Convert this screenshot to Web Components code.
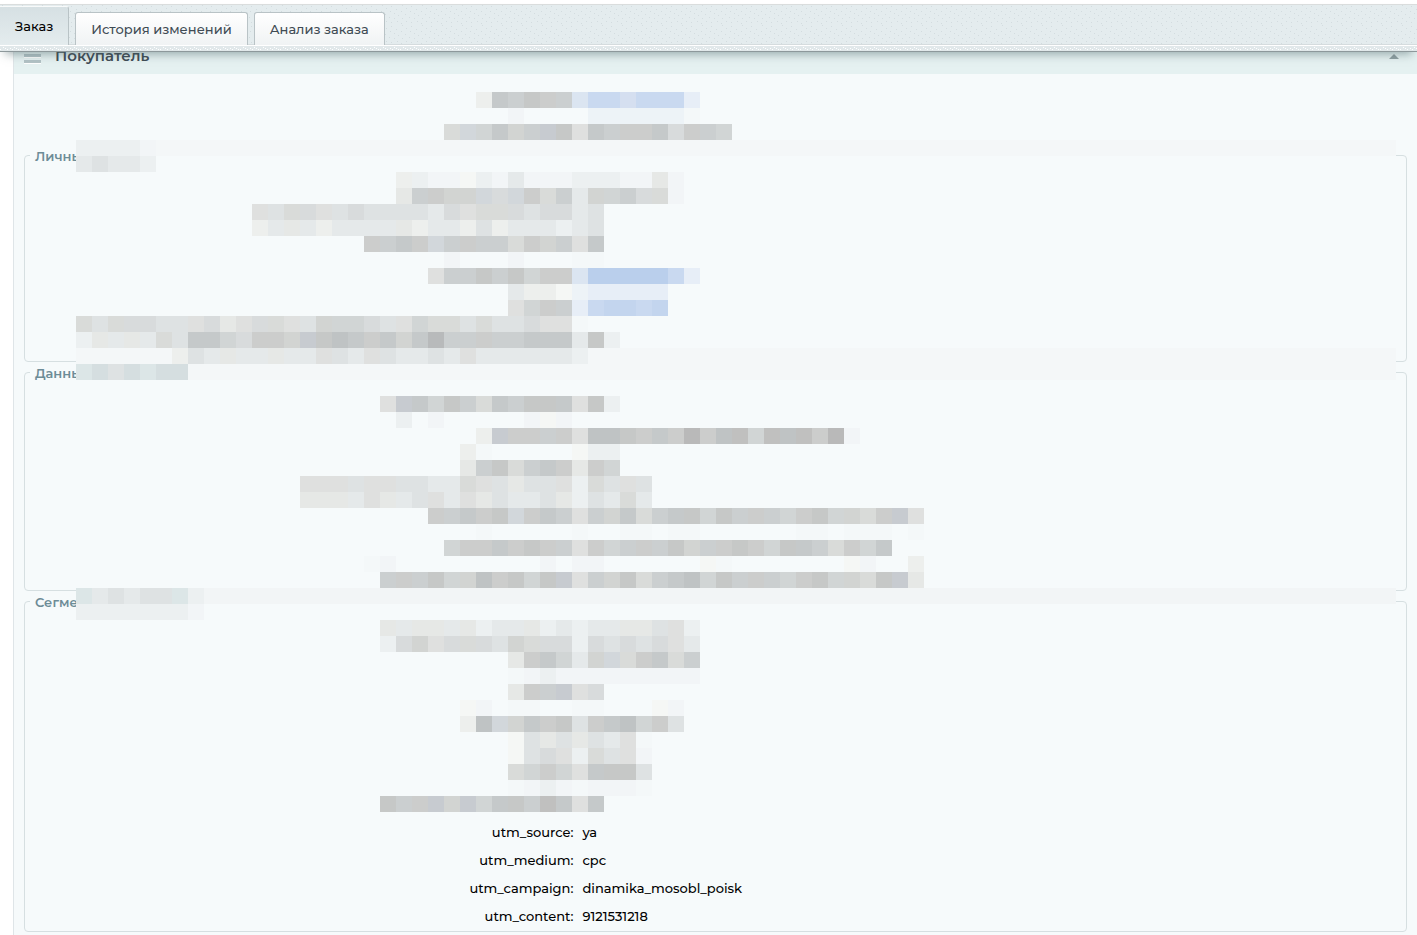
<!DOCTYPE html>
<html lang="ru">
<head>
<meta charset="utf-8">
<meta name="viewport" content="width=device-width, initial-scale=1">
<title>Заказ</title>
<style>
	html {
		background: #fff;
	}

	body {
		margin: 0;
		padding-top: 4px;
		font: 500 13px/16px Montserrat, Inter, "Liberation Sans", sans-serif;
		color: #000;
		overflow: hidden;
	}
</style>
</head>
<body>
<order-tabs>
	<order-tab active>Заказ</order-tab>
	<order-tab>История изменений</order-tab>
	<order-tab>Анализ заказа</order-tab>
</order-tabs>
<order-panel heading="Покупатель">
	<order-field></order-field>
	<order-field></order-field>
	<order-group legend="Личны">
		<order-field></order-field>
		<order-field></order-field>
		<order-field></order-field>
		<order-field></order-field>
		<order-field></order-field>
		<order-field tall></order-field>
	</order-group>
	<order-group legend="Данны">
		<order-field></order-field>
		<order-field></order-field>
		<order-field></order-field>
		<order-field></order-field>
		<order-field></order-field>
		<order-field></order-field>
		<order-field></order-field>
	</order-group>
	<order-group legend="Сегме">
		<order-field></order-field>
		<order-field></order-field>
		<order-field></order-field>
		<order-field></order-field>
		<order-field></order-field>
		<order-field></order-field>
		<order-field></order-field>
		<order-field label="utm_source:">ya</order-field>
		<order-field label="utm_medium:">cpc</order-field>
		<order-field label="utm_campaign:">dinamika_mosobl_poisk</order-field>
		<order-field label="utm_content:">9121531218</order-field>
	</order-group>
	<pixel-mask slot="mask"></pixel-mask>
</order-panel>

<script>
class OrderTabs extends HTMLElement {
	constructor() {
		super();
		this.attachShadow({ mode: "open" });
		this.shadowRoot.innerHTML = `
		<style>
			:host {
				display: block;
				position: relative;
				z-index: 2;
				background: #e4ecee;
				border-top: 1px solid #dadddd;
				border-bottom: 1px solid #8d989b;
				box-shadow: 0 7px 9px -5px rgba(70, 95, 100, 0.5);
			}

			.texture {
				position: absolute;
				inset: 0;
				width: 100%;
				height: 100%;
			}

			nav {
				position: relative;
				display: flex;
				align-items: flex-end;
				gap: 6px;
				height: 40px;
				border-bottom: 1px solid #fff;
				box-shadow: inset 0 -1px #d5dcde;
			}

			.edge {
				display: block;
				position: relative;
				width: 100%;
				height: 5px;
			}
		</style>
		<svg class="texture" aria-hidden="true">
			<defs>
				<pattern id="grain" width="20" height="20" patternUnits="userSpaceOnUse">
					<path fill="#d3dcdf" d="M2 0h1v1h-1zM11 1h1v1h-1zM6 3h1v1h-1zM16 4h1v1h-1zM1 6h1v1h-1zM10 6h1v1h-1zM14 8h1v1h-1zM5 9h1v1h-1zM18 10h1v1h-1zM9 12h1v1h-1zM2 13h1v1h-1zM14 13h1v1h-1zM6 16h1v1h-1zM17 16h1v1h-1zM11 17h1v1h-1zM1 18h1v1h-1z"/>
				</pattern>
			</defs>
			<rect width="100%" height="100%" fill="url(#grain)"/>
		</svg>
		<nav role="tablist"><slot></slot></nav>
		<svg class="edge" aria-hidden="true">
			<defs>
				<pattern id="dots" width="20" height="5" patternUnits="userSpaceOnUse">
					<path fill="#fff" d="M0 3h1v1h-1zM3 1h1v1h-1zM5 2h1v1h-1zM7 3h1v1h-1zM10 2h1v1h-1zM12 3h1v1h-1zM14 1h1v1h-1zM16 2h1v1h-1zM18 3h1v1h-1z"/>
				</pattern>
			</defs>
			<rect width="100%" height="5" fill="#e1e8ea"/>
			<rect width="100%" height="5" fill="url(#dots)"/>
		</svg>
	`;
	}
}

class OrderTab extends HTMLElement {
	constructor() {
		super();
		this.attachShadow({ mode: "open" });
		this.shadowRoot.innerHTML = `
		<style>
			:host {
				display: block;
			}

			button {
				display: block;
				height: 33px;
				margin: 0;
				padding: 0 15px;
				border: 1px solid #b9c3c6;
				border-bottom: 0;
				border-radius: 3px 3px 0 0;
				background: linear-gradient(#fff, #f0f3f4);
				color: #3f4b54;
				font: inherit;
				cursor: pointer;
			}

			:host([active]) button {
				height: 39px;
				padding-bottom: 1px;
				border-left: 0;
				border-top-color: #f8fafa;
				border-radius: 0 3px 0 0;
				background: linear-gradient(#d6e0e3, #e4ecee);
				color: #000;
			}
		</style>
		<button type="button" role="tab"><slot></slot></button>
	`;
	}

	connectedCallback() {
		this.shadowRoot.querySelector("button").ariaSelected = this.hasAttribute("active");
	}
}

class OrderPanel extends HTMLElement {
	constructor() {
		super();
		this.attachShadow({ mode: "open" });
		this.shadowRoot.innerHTML = `
		<style>
			:host {
				display: block;
				margin: -12px 0 0 13px;
				border-left: 1px solid #dfe5e8;
				background: #f6fafb;
			}

			header {
				display: flex;
				align-items: center;
				gap: 14px;
				box-sizing: border-box;
				height: 34px;
				padding: 0 18px 2px 10px;
				background: #e5f1f1;
			}

			h2 {
				flex: 1;
				margin: 0;
				font-size: 15px;
				font-weight: 600;
				line-height: 20px;
				color: #3f4b54;
			}

			button {
				display: flex;
				padding: 0;
				border: 0;
				background: none;
				cursor: pointer;
			}

			.body {
				position: relative;
				padding: 15px 10px 3px;
				display: flow-root;
			}
		</style>
		<header>
			<svg width="17" height="16" aria-hidden="true">
				<path fill="#b3c3c6" d="M0 0h17v3H0zM0 6h17v3H0zM0 12h17v3H0z"/>
				<path fill="#fff" d="M0 3h17v1H0zM0 9h17v1H0zM0 15h17v1H0z"/>
			</svg>
			<h2></h2>
			<button type="button" aria-label="Свернуть">
				<svg width="10" height="5"><path fill="#8f9fa2" d="M5 0l5 5H0z"/></svg>
			</button>
		</header>
		<div class="body">
			<slot></slot>
			<slot name="mask"></slot>
		</div>
	`;
	}

	connectedCallback() {
		this.shadowRoot.querySelector("h2").textContent = this.getAttribute("heading");
	}
}

class OrderGroup extends HTMLElement {
	constructor() {
		super();
		this.attachShadow({ mode: "open" });
		this.shadowRoot.innerHTML = `
		<style>
			:host {
				display: block;
				margin-top: 1px;
			}

			fieldset {
				min-width: 0;
				margin: 0;
				padding: 12px 0 1px;
				border: 1px solid #d6dfe1;
				border-radius: 4px;
			}

			legend {
				margin-left: 5px;
				padding: 2px 5px 0;
				line-height: 16px;
				font-weight: 600;
				color: #6d8c97;
			}
		</style>
		<fieldset>
			<legend></legend>
			<slot></slot>
		</fieldset>
	`;
	}

	connectedCallback() {
		this.shadowRoot.querySelector("legend").textContent = this.getAttribute("legend");
	}
}

class OrderField extends HTMLElement {
	constructor() {
		super();
		this.attachShadow({ mode: "open" });
		this.shadowRoot.innerHTML = `
		<style>
			:host {
				display: flex;
				min-height: 28px;
				align-items: center;
			}

			:host([tall]) {
				min-height: 44px;
			}

			.label {
				flex: 0 0 40%;
				box-sizing: border-box;
				padding-right: 4px;
				text-align: right;
			}

			.value {
				flex: 1;
				padding-left: 5px;
			}
		</style>
		<span class="label"></span>
		<span class="value"><slot></slot></span>
	`;
	}

	connectedCallback() {
		this.shadowRoot.querySelector(".label").textContent = this.getAttribute("label") || "";
	}
}

// a-j run from light to dark, capitals are the warm versions
const SHADES = {
	z: "#f4f8f9",
	a: "#f2f5f7", b: "#ecf0f1", c: "#e5e9ea", d: "#dee2e3", e: "#d8dbdc",
	f: "#d1d5d5", g: "#cbcfd0", h: "#c5c9ca", i: "#bfc3c4", j: "#b8babb",
	A: "#f5f7f5", B: "#edefed", C: "#e6e8e6", D: "#dfe0df", E: "#d9dbd9",
	F: "#d2d4d2", G: "#cccdcc", H: "#c6c8c7", I: "#c0c0bf", J: "#b9b9b9",
	m: "#c7cbd0", n: "#d2d7db", x: "#dce6e7", y: "#d5dee0",
	p: "#edf3f7", q: "#e7eef7", r: "#dbe5f1", s: "#d5dff0",
	t: "#c9d9f0", u: "#bacfec", v: "#c3d5ee",
};

// [first column, cells, full-width band colour]
const ROWS = [
	[25, "BhgHGgrttstttq"],
	[27, "a....ppppppz"],
	[23, "EnfhFgmHDhgGGheGgf"],
	[0, "bbbba", "#f4f7f8"],
	[0, "cdccb"],
	[20, "BbaaAbacaaabbbaaCa"],
	[20, "CgGFFnenGEgcFfgeEa"],
	[11, "DdEeDdeddddceDEEedeecd"],
	[11, "BcCcBccccCBccBdBcccbcd"],
	[18, "GghGngGggEGFgDh"],
	[23, "a...a...zz"],
	[22, "DggHgHfGGruuuuutq"],
	[27, "cBBApqqqqq"],
	[27, "DfGgqtvvtv"],
	[0, "EdEeeddDeCDeEDdFffedDfEEdEddeDDz"],
	[0, "bCcCcEdhhfeGGFmHihGhFhjggGgghhhcHb"],
	[6, "BdcCccCccDdcDdccdcDccccccb", "#f4f7f8"],
	[0, "xydyxyy", "#f4f7f8"],
	[0, ""],
	[19, "DmhfHgEhgHHhDHb"],
	[20, "b.a.....aAa"],
	[25, "BmGGgGDiiHGhGJGiIfIiIGJa"],
	[24, "Bz.....Abb"],
	[24, "CgHEghGCGf"],
	[14, "DDDdDDddccEDdCddDbEdDd"],
	[14, "CCCcDCcdDcDCdccdCbdcEc"],
	[22, "GghGHnGhgDgFhEghHfHgGgfGHfFEGmD"],
	[25, "z.....z..zz.zz......zz.zzz.z"],
	[23, "fGGhGHGgDGfgGgHFgGHGfHhgEGfh"],
	[18, "za.........a.aa......Az.......Aa..B"],
	[19, "gGgHfFiGHfHmDgFHEghifHgGgfGHfFEHmC"],
	[0, "xcdcddxb", "#f2f5f6"],
	[0, "bbbbbbba"],
	[19, "CcCCcCbccCbcbccCCdDb"],
	[19, "beFDeEedFEeebededeDc"],
	[27, "CGhfcFnEGhEg"],
	[27, "zabaaaaaaaaa"],
	[27, "CGgmDe"],
	[24, "Aa.zz..zz...Aa"],
	[24, "BinFhGHdGhifGd"],
	[27, "AdCdCdcDz"],
	[27, "AdeDbEdDa"],
	[27, "EfGfDhHHd"],
	[27, "zabazaaaz"],
	[19, "HgGmFmfhHgIhDh"],
];

class PixelMask extends HTMLElement {
	#cell = 16;

	constructor() {
		super();
		this.attachShadow({ mode: "open" });
		this.shadowRoot.innerHTML = `
		<style>
			:host {
				display: block;
				position: absolute;
				top: 18px;
				left: 62px;
				right: 21px;
				overflow: hidden;
			}

			.row {
				display: flex;
				height: ${this.#cell}px;
			}

			.row i {
				flex: none;
				width: ${this.#cell}px;
			}
		</style>
	`;
		for (const [start, cells, band] of ROWS) {
			this.shadowRoot.append(this.#createRow(start, cells, band));
		}
	}

	#createRow(start, cells, band) {
		const row = document.createElement("div");
		row.className = "row";
		row.style.paddingLeft = `${start * this.#cell}px`;
		if (band) row.style.background = band;
		for (const key of cells) {
			const cell = document.createElement("i");
			if (SHADES[key]) cell.style.background = SHADES[key];
			row.append(cell);
		}
		return row;
	}
}

customElements.define("order-tabs", OrderTabs);
customElements.define("order-tab", OrderTab);
customElements.define("order-panel", OrderPanel);
customElements.define("order-group", OrderGroup);
customElements.define("order-field", OrderField);
customElements.define("pixel-mask", PixelMask);
</script>
</body>
</html>
